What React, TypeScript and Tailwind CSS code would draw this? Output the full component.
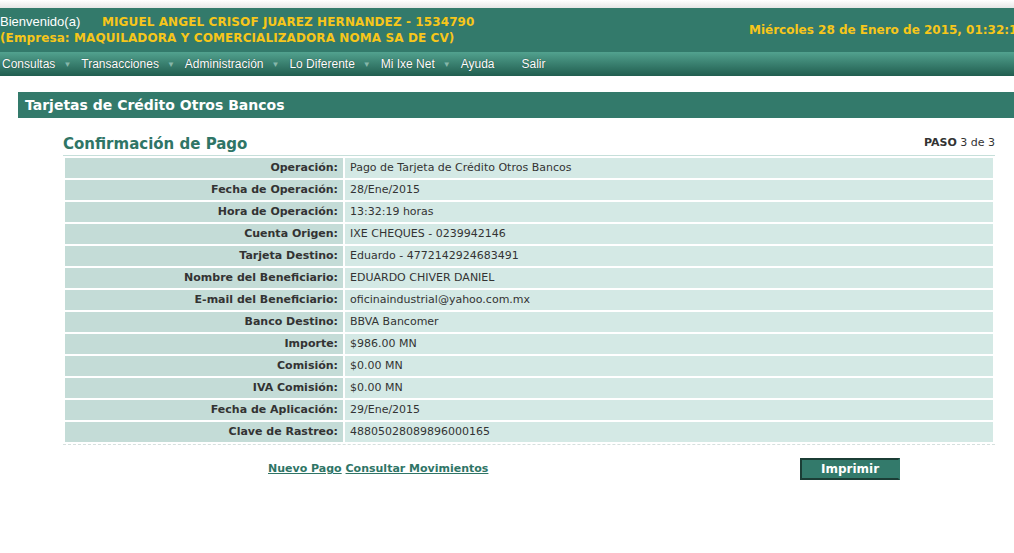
import React from 'react';

const verdana = "font-['DejaVu_Sans',Verdana,sans-serif]";
const arial = "font-['Liberation_Sans',Arial,sans-serif]";

const menu = ['Consultas', 'Transacciones', 'Administración', 'Lo Diferente', 'Mi Ixe Net', 'Ayuda', 'Salir'];

const rows: [string, string][] = [
  ['Operación:', 'Pago de Tarjeta de Crédito Otros Bancos'],
  ['Fecha de Operación:', '28/Ene/2015'],
  ['Hora de Operación:', '13:32:19 horas'],
  ['Cuenta Origen:', 'IXE CHEQUES - 0239942146'],
  ['Tarjeta Destino:', 'Eduardo - 4772142924683491'],
  ['Nombre del Beneficiario:', 'EDUARDO CHIVER DANIEL'],
  ['E-mail del Beneficiario:', 'oficinaindustrial@yahoo.com.mx'],
  ['Banco Destino:', 'BBVA Bancomer'],
  ['Importe:', '$986.00 MN'],
  ['Comisión:', '$0.00 MN'],
  ['IVA Comisión:', '$0.00 MN'],
  ['Fecha de Aplicación:', '29/Ene/2015'],
  ['Clave de Rastreo:', '48805028089896000165'],
];

const App = () => {
  return (
    <div className="w-[1014px] h-[553px] overflow-hidden bg-white">
      <div className="h-[8px] bg-gradient-to-b from-white to-[#e6e6e6]"></div>

      {/* header */}
      <div className="h-[44px] bg-[#337a6b] flex items-center justify-between whitespace-nowrap overflow-hidden">
        <div className="leading-[16px]">
          <div className="flex items-baseline">
            <span className={`${arial} text-[13px] text-white w-[102px]`}>Bienvenido(a)</span>
            <span className={`${verdana} text-[12px] font-bold text-[#f7c61a] tracking-[0.1px]`}>MIGUEL ANGEL CRISOF JUAREZ HERNANDEZ - 1534790</span>
          </div>
          <div className={`${verdana} text-[12px] font-bold text-[#f7c61a] tracking-[0.1px]`}>(Empresa: MAQUILADORA Y COMERCIALIZADORA NOMA SA DE CV)</div>
        </div>
        <div className={`${verdana} text-[12px] font-bold text-[#f7c61a] w-[265px] overflow-hidden`}>
          Miércoles 28 de Enero de 2015, 01:32:1
        </div>
      </div>

      {/* menu */}
      <div className="h-[24px] bg-gradient-to-b from-[#52a28f] to-[#215e50] flex items-center">
        {menu.map((m, i) => (
          <div key={m} className={`flex items-center ${i === menu.length - 1 ? 'ml-[25px]' : ''}`}>
            <span className={`${arial} text-[12px] text-white pl-[2px] [text-shadow:0_0_1px_rgba(0,0,0,0.6)]`}>{m}</span>
            {i < menu.length - 2 && <span className="text-[8px] text-[#86b7aa] mx-[8px]">▼</span>}
          </div>
        ))}
      </div>

      {/* content */}
      <div className="pl-[18px] pt-[16px]">
        <div className="h-[26px] bg-[#337a6b] flex items-center pl-[7px]">
          <span className={`${verdana} text-[14px] font-bold text-white`}>Tarjetas de Crédito Otros Bancos</span>
        </div>

        <div className="ml-[45px] w-[932px] mt-[16px]">
          <div className="flex items-end justify-between border-b border-[#c6dfda] pb-[1px]">
            <span className={`${verdana} text-[15px] font-bold text-[#2f7566] leading-[20px]`}>Confirmación de Pago</span>
            <span className={`${verdana} text-[11px] text-[#333] pb-[3px]`}><b>PASO</b> 3 de 3</span>
          </div>

          <table className="w-[932px] border-separate border-spacing-[2px]">
            <tbody>
              {rows.map(([k, v]) => (
                <tr key={k} className="h-[20px]">
                  <td className={`${verdana} w-[278px] bg-[#c4dcd7] text-right pr-[5px] text-[11px] font-bold text-[#333] p-0 pt-[1px]`}>{k}</td>
                  <td className={`${verdana} bg-[#d4e9e5] pl-[5px] text-[11px] text-[#333] p-0 pt-[1px]`}>{v}</td>
                </tr>
              ))}
            </tbody>
          </table>

          <div className="border-t border-dashed border-[#d6e0de]"></div>

          <div className="flex items-center mt-[13px]">
            <div className={`${verdana} text-[11px] font-bold text-[#2f7566] ml-[205px] w-[532px] pt-[1px]`}>
              <a href="#" className="underline">Nuevo Pago</a>{' '}
              <a href="#" className="underline">Consultar Movimientos</a>
            </div>
            <button className={`${verdana} w-[100px] h-[22px] bg-[#337a6b] border-2 border-[#1b3d35] border-r-[#337a6b] border-b-[#1b3d35] text-white text-[12px] font-bold`}>
              Imprimir
            </button>
          </div>
        </div>
      </div>
    </div>
  );
};

export default App;
